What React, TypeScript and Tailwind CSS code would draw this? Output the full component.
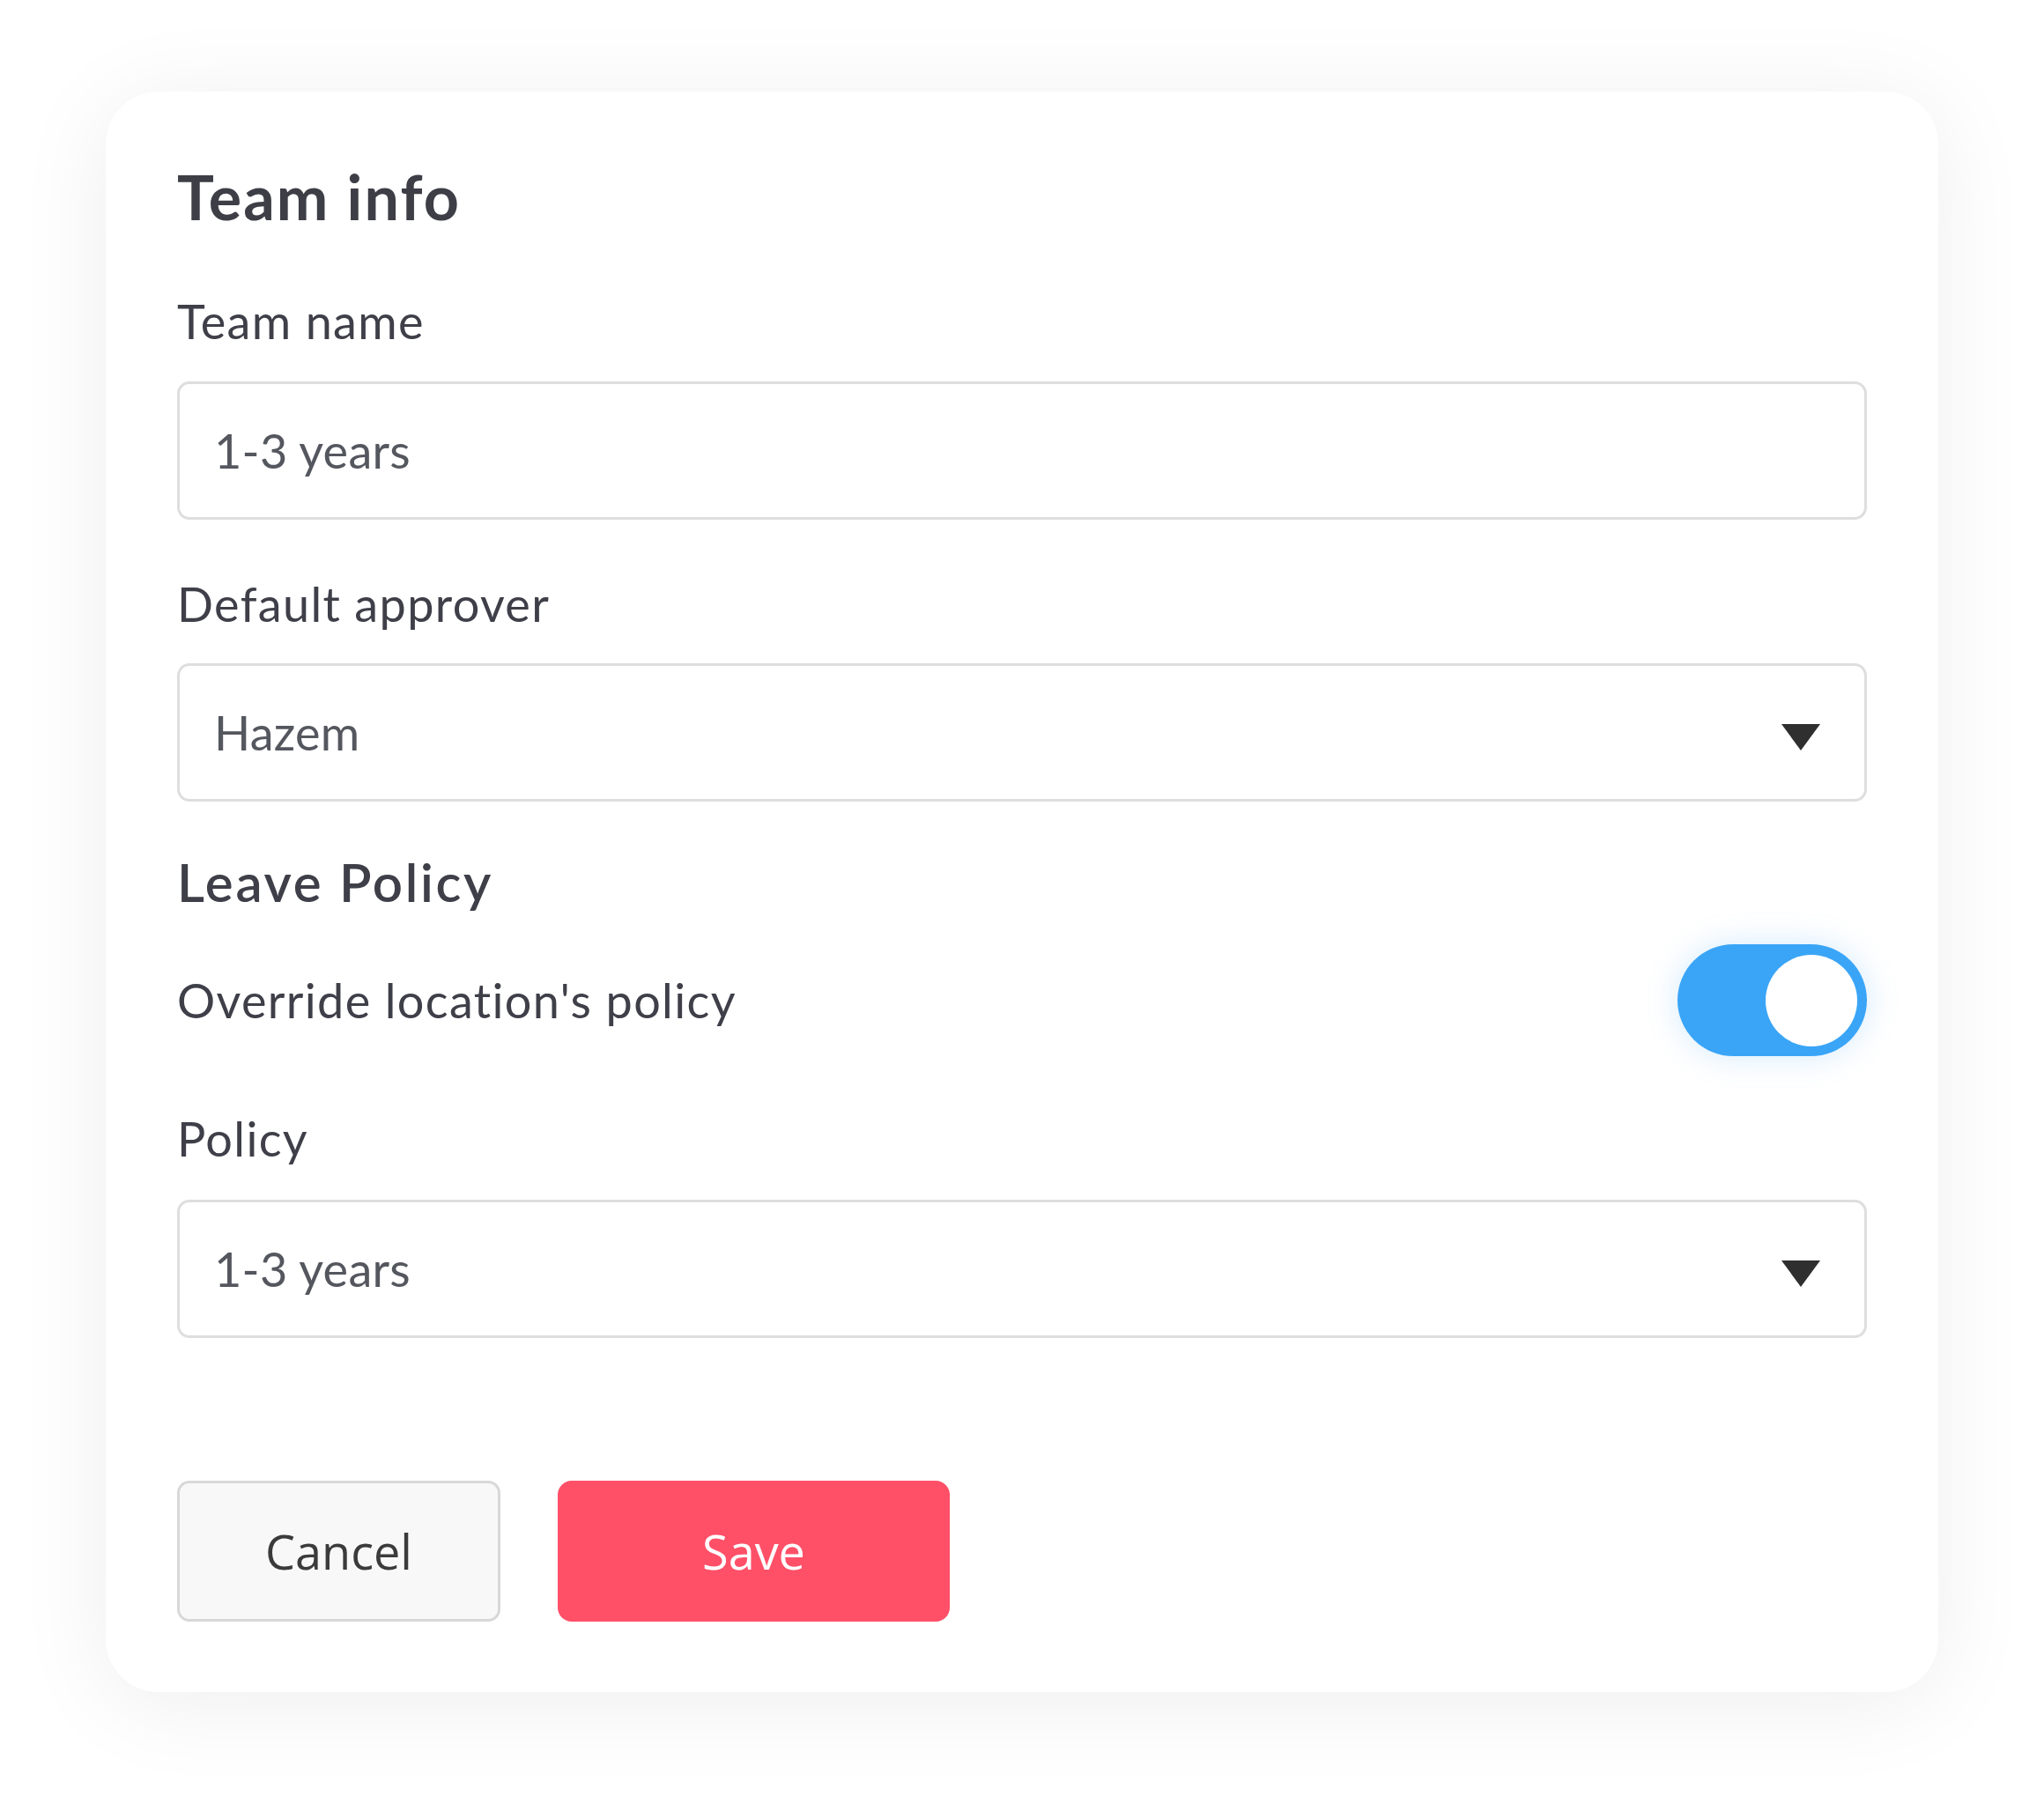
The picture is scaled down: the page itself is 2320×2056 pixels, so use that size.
const LABEL = "block text-[54px] leading-none tracking-[0.025em] text-[#3e3f48]";

function Caret() {
  return (
    <svg width="44" height="30" viewBox="0 0 44 30" className="mt-[10px] shrink-0">
      <polygon points="0,0 44,0 22,30" fill="#2f2f2f" />
    </svg>
  );
}

function Field({ value, select }: { value: string; select?: boolean }) {
  return (
    <div className="flex h-[157px] items-center justify-between rounded-[14px] border-[3px] border-[#dedede] bg-white pl-[39px] pr-[50px]">
      <span className="text-[54px] leading-none tracking-[0.005em] text-[#55575f]">{value}</span>
      {select && <Caret />}
    </div>
  );
}

export default function App() {
  return (
    <div className="min-h-screen bg-white px-[120px] pt-[104px] font-['Lato',sans-serif]">
      <div className="rounded-[60px] bg-white px-[81px] pt-[84px] pb-[80px] shadow-[0_12px_110px_rgba(0,0,0,0.07)]">
        <h1 className="text-[70px] font-bold leading-none tracking-[0.03em] text-[#3d3e46]">Team info</h1>

        <label className={LABEL + " mt-[80px]"}>Team name</label>
        <div className="mt-[41px]">
          <Field value="1-3 years" />
        </div>

        <label className={LABEL + " mt-[69px]"}>Default approver</label>
        <div className="mt-[40px]">
          <Field value="Hazem" select />
        </div>

        <h2 className="mt-[61px] text-[60px] font-semibold leading-none tracking-[0.045em] text-[#3e3f48]">Leave Policy</h2>

        <div className="mt-[41px] flex items-center justify-between">
          <span className="text-[54px] leading-none tracking-[0.025em] text-[#3e3f48]">Override location's policy</span>
          <div className="flex h-[127px] w-[215px] items-center justify-end rounded-full bg-[#3aa5f7] pr-[11px] shadow-[0_0_36px_rgba(58,165,247,0.22)]">
            <div className="h-[104px] w-[104px] rounded-full bg-white" />
          </div>
        </div>

        <label className={LABEL + " mt-[67px]"}>Policy</label>
        <div className="mt-[42px]">
          <Field value="1-3 years" select />
        </div>

        <div className="mt-[162px] flex gap-[65px] font-['Open_Sans',sans-serif]">
          <button className="flex h-[160px] w-[367px] items-center justify-center rounded-[14px] border-[3px] border-[#d8d8d8] bg-[#f8f8f8] text-[54px] leading-none text-[#3b3b3b]">
            Cancel
          </button>
          <button className="flex h-[160px] w-[445px] items-center justify-center rounded-[16px] bg-[#ff5068] text-[54px] leading-none text-white">
            Save
          </button>
        </div>
      </div>
      <div className="h-[136px]" />
    </div>
  );
}
